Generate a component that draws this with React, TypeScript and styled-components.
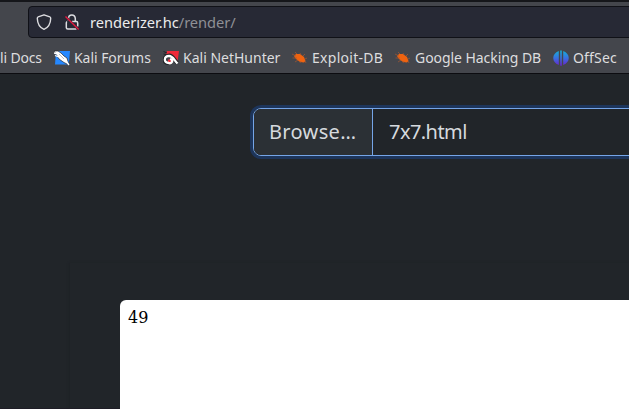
import React from 'react';
import styled, { createGlobalStyle } from 'styled-components';

const GlobalStyle = createGlobalStyle`
  * { box-sizing: border-box; }
  html, body { margin: 0; overflow: hidden; background: #212529; }
`;

const Window = styled.div`
  width: 629px;
  height: 409px;
  display: flex;
  flex-direction: column;
  overflow: hidden;
  background: linear-gradient(#212529 408px, #1e1d26 408px);
  font-family: "Noto Sans", sans-serif;
`;

const Chrome = styled.header`
  flex: none;
  height: 74px;
  padding-top: 4px;
  background: #44464c;
  border-top: 2px solid #15161a;
  border-bottom: 1px solid #0c0c10;
`;

const AddressBar = styled.div`
  height: 32px;
  margin-left: 28px;
  margin-right: -8px;
  padding-left: 7px;
  display: flex;
  align-items: center;
  background: #272935;
  border: 1px solid #101117;
  border-radius: 4px;
`;

const ShieldIcon = styled.svg`
  width: 16px;
  height: 18px;
  margin-right: 12px;
`;

const LockIcon = styled.svg`
  width: 16px;
  height: 18px;
  margin-right: 10px;
`;

const Url = styled.span`
  font-size: 14.67px;
  line-height: 20px;
  letter-spacing: -0.03px;
  color: #ececed;
  white-space: nowrap;
`;

const Path = styled.span`
  color: #8f9096;
`;

const Bookmarks = styled.nav`
  height: 35px;
  padding-top: 5px;
  display: flex;
  align-items: center;
  gap: 12px;
  overflow: hidden;
`;

const Bookmark = styled.span<{ $width: number; $spacing?: number }>`
  flex: none;
  width: ${p => p.$width}px;
  display: flex;
  align-items: center;
  gap: 4px;
  color: #dddddf;
  font-size: 14px;
  line-height: 20px;
  letter-spacing: ${p => p.$spacing ?? 0}px;
  white-space: nowrap;

  svg { flex: none; width: 16px; height: 16px; }
`;

const Page = styled.main`
  flex: 1;
  min-height: 0;
  padding-top: 34px;
`;

const FileInput = styled.div`
  width: 400px;
  height: 48px;
  margin-left: 253px;
  display: flex;
  overflow: hidden;
  border: 1px solid #75a5e7;
  border-radius: 8px;
  box-shadow: 0 0 0 3px #1d355b;
  color: #d6dade;
  font-size: 20px;
  line-height: 46px;
`;

const BrowseButton = styled.span`
  width: 119px;
  padding-left: 15px;
  letter-spacing: 0.35px;
  background: #2b3035;
  border-right: 1px solid #75a5e7;
`;

const FileName = styled.span`
  padding-left: 16px;
  letter-spacing: -0.55px;
`;

const Result = styled.section`
  height: 146px;
  margin: 107px 0 0 70px;
  padding: 37px 0 0 50px;
  box-shadow: -1px 0 2px #1e2226;
`;

const Output = styled.div`
  height: 110px;
  padding: 8px;
  background: #fff;
  border-radius: 6px 0 0;
  color: #000;
  font: 16px/19px "DejaVu Serif", serif;
`;

const Shield = () => (
  <ShieldIcon viewBox="0 0 16 18" fill="none" stroke="#dcdce0" strokeWidth="1.4" strokeLinejoin="round">
    <path d="M8 1.8 L13.8 3.8 Q14.8 4.2 14.7 5.5 C14.5 11 12 14.7 8 16.4 C4 14.7 1.5 11 1.3 5.5 Q1.2 4.2 2.2 3.8 Z" />
  </ShieldIcon>
);

const InsecureLock = () => (
  <LockIcon viewBox="0 0 16 18" fill="none" stroke="#dcdce0" strokeWidth="1.5">
    <path d="M4.5 8 V5.5 C4.5 .8 11.3 .8 11.3 5.5 V8 M8 8.5 H12.5 Q13.7 8.5 13.7 10 V13.5 M3 8.5 Q2.3 9 2.3 10 V14.5 Q2.3 16 3.8 16 H12.5" />
    <path d="M1.5 3.5 L14.7 16.5" stroke="#272935" strokeWidth="2.4" />
    <path d="M1.5 3.5 L14.7 16.5" stroke="#e5173f" strokeWidth="1.4" />
  </LockIcon>
);

const ForumsIcon = () => (
  <svg viewBox="0 0 16 16">
    <path d="M2 1H16L14.8 14.5H1Z" fill="#2588ff" />
    <path d="M0 1L4 1L7 3L10 6L13 8L15 15L10 12.5L5 9L2.5 5Z" fill="#fff" stroke="#25262c" strokeWidth=".7" />
    <path d="M0 3L4 4M1 5.5L5 7M12 11L15 15" stroke="#fff" strokeWidth="1.3" />
    <path d="M5 4L10 9" stroke="#9da3ad" strokeWidth=".7" />
  </svg>
);

const NetHunterIcon = () => (
  <svg viewBox="0 0 16 16">
    <path d="M4 1H16L14.5 12L10 8L3 4Z" fill="#ee2939" />
    <path d="M6 13C0 14 0 6 6 5.5C10 5 11 10 14.5 13" fill="none" stroke="#24252a" strokeWidth="4" />
    <path d="M5 9.5H9V13.5H5Z" fill="#ee2939" />
    <path d="M6 13C0 13 1 6 6 6C10 6 11 10 14.5 13.5M5.5 13C9 14 11 10 7 9" fill="none" stroke="#fff" strokeWidth="2.3" />
    <path d="M.5 1.5L4 3M.5 4L3 4.5" stroke="#202127" strokeWidth="1" />
  </svg>
);

const BugIcon = () => (
  <svg viewBox="0 0 16 16">
    <path d="M2 6L4 4L8 4L12 7L13.5 11L12 12.5L8 12L4 9Z" fill="#ef6310" />
    <path d="M0 4L4 6M.5 8L5 8M5 4L3 2M9 5L8 3M11 6L13 4M13 9L15 8M6 10L3 12M9 11L8 13M13 11L14 13" stroke="#a95731" strokeWidth=".7" />
  </svg>
);

const OffSecIcon = () => (
  <svg viewBox="0 0 16 16">
    <defs>
      <linearGradient id="offsec" x1="0" y1="0" x2="0" y2="1">
        <stop stopColor="#14b1d5" />
        <stop offset=".5" stopColor="#3970df" />
        <stop offset="1" stopColor="#6922cf" />
      </linearGradient>
    </defs>
    <path d="M5.8 1V15C-1.6 12.5 -1.6 3.5 5.8 1ZM10.2 1V15C17.6 12.5 17.6 3.5 10.2 1ZM7.2 .5H8.8V15.7H7.2Z" fill="url(#offsec)" />
  </svg>
);

export default function App() {
  return (
    <>
      <GlobalStyle />
      <Window>
        <Chrome>
          <AddressBar>
            <Shield />
            <InsecureLock />
            <Url>renderizer.hc<Path>/render/</Path></Url>
          </AddressBar>
          <Bookmarks>
            <Bookmark $width={42} $spacing={-0.15}>li Docs</Bookmark>
            <Bookmark $width={97} $spacing={-0.05}><ForumsIcon />Kali Forums</Bookmark>
            <Bookmark $width={117}><NetHunterIcon />Kali NetHunter</Bookmark>
            <Bookmark $width={91} $spacing={0.28}><BugIcon />Exploit-DB</Bookmark>
            <Bookmark $width={146} $spacing={-0.06}><BugIcon />Google Hacking DB</Bookmark>
            <Bookmark $width={66} $spacing={0.18}><OffSecIcon />OffSec</Bookmark>
          </Bookmarks>
        </Chrome>
        <Page>
          <FileInput>
            <BrowseButton>Browse…</BrowseButton>
            <FileName>7x7.html</FileName>
          </FileInput>
          <Result>
            <Output>49</Output>
          </Result>
        </Page>
      </Window>
    </>
  );
}
